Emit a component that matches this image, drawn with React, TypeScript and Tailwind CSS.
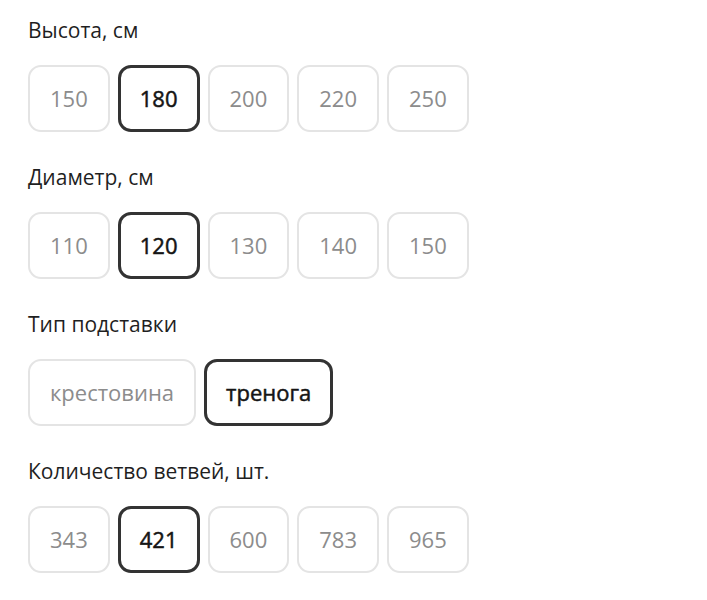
import { useState } from "react";

type OptionGroupProps = {
  title: string;
  options: string[];
  initial: string;
};

function OptionGroup({ title, options, initial }: OptionGroupProps) {
  const [value, setValue] = useState(initial);
  return (
    <div className="flex flex-col">
      <div className="text-[21px] leading-[24px] text-[#1f1f1f]">{title}</div>
      <div className="flex gap-[8px] mt-[23px]">
        {options.map((o) => (
          <button
            key={o}
            onClick={() => setValue(o)}
            className={
              o === value
                ? "h-[67px] px-[19px] rounded-[13px] border-[3px] border-[#333333] text-[22px] text-[#151515] [-webkit-text-stroke:0.5px_#151515]"
                : "h-[67px] px-[20px] rounded-[13px] border-2 border-[#e4e4e4] text-[22px] text-[#8c8c8c]"
            }
          >
            {o}
          </button>
        ))}
      </div>
    </div>
  );
}

export default function App() {
  return (
    <div
      className="min-h-screen bg-white pl-[28px] pt-[18px] flex flex-col gap-[33px]"
      style={{ fontFamily: '"Open Sans", "Noto Sans", sans-serif' }}
    >
      <OptionGroup title="Высота, см" options={["150", "180", "200", "220", "250"]} initial="180" />
      <OptionGroup title="Диаметр, см" options={["110", "120", "130", "140", "150"]} initial="120" />
      <OptionGroup title="Тип подставки" options={["крестовина", "тренога"]} initial="тренога" />
      <OptionGroup title="Количество ветвей, шт." options={["343", "421", "600", "783", "965"]} initial="421" />
    </div>
  );
}
